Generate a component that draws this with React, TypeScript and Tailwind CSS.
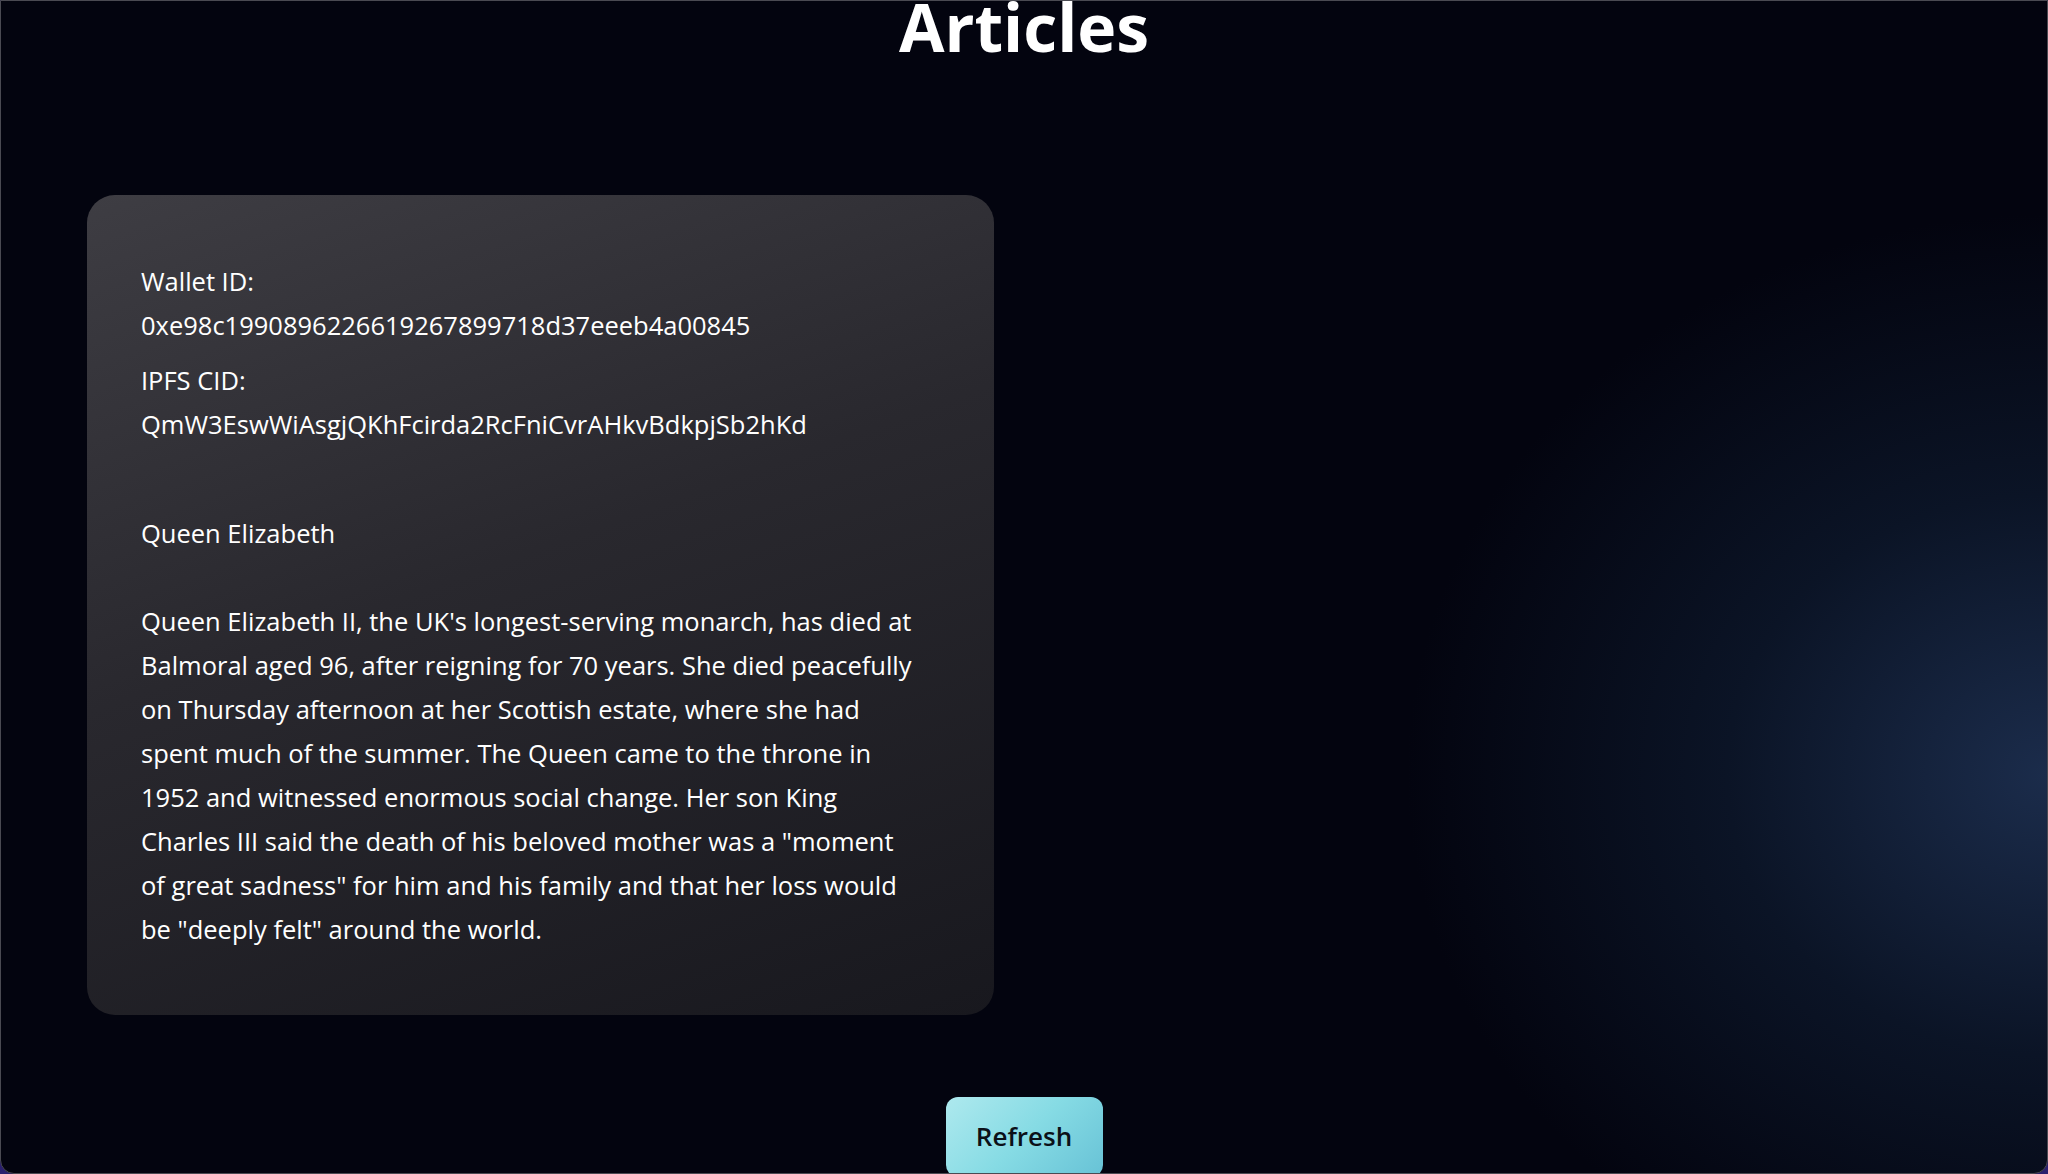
import React from 'react';

const article = {
  wallet: '0xe98c1990896226619267899718d37eeeb4a00845',
  cid: 'QmW3EswWiAsgjQKhFcirda2RcFniCvrAHkvBdkpjSb2hKd',
  title: 'Queen Elizabeth',
  // kept as the lines the original layout wraps to
  body: [
    'Queen Elizabeth II, the UK\'s longest-serving monarch, has died at',
    'Balmoral aged 96, after reigning for 70 years. She died peacefully',
    'on Thursday afternoon at her Scottish estate, where she had',
    'spent much of the summer. The Queen came to the throne in',
    '1952 and witnessed enormous social change. Her son King',
    'Charles III said the death of his beloved mother was a "moment',
    'of great sadness" for him and his family and that her loss would',
    'be "deeply felt" around the world.',
  ],
};

function ArticleCard() {
  return (
    <div className="w-[907px] rounded-[28px] bg-[linear-gradient(160deg,#3e3d43_0%,#29282e_45%,#18181e_100%)] px-[54px] pt-[64px] pb-[64px] text-[25.5px] leading-[44px] text-white">
      <p>Wallet ID:</p>
      <p>{article.wallet}</p>
      <p className="mt-[11px]">IPFS CID:</p>
      <p>{article.cid}</p>
      <p className="mt-[65px]">{article.title}</p>
      <p className="mt-[44px]">
        {article.body.map((line) => (
          <span key={line} className="block whitespace-nowrap">
            {line}
          </span>
        ))}
      </p>
    </div>
  );
}

export default function App() {
  return (
    <div className="h-[1174px] w-full bg-[#2a1f6e]">
      <div
        className="flex h-full w-full flex-col overflow-hidden rounded-b-[14px] border border-[#4a4a52] bg-[radial-gradient(ellipse_640px_560px_at_100%_66%,#1b2c4b_0%,#0b1426_50%,#03040f_100%)] bg-[#03040f]"
        style={{ fontFamily: '"Open Sans", "Noto Sans", sans-serif' }}
      >
        <h1 className="mt-[-20px] text-center text-[66px] font-bold leading-[90px] text-white">
          Articles
        </h1>

        <div className="mt-[124px] px-[86px]">
          <ArticleCard />
        </div>

        <div className="mt-[82px] flex justify-center">
          <button className="h-[80px] w-[157px] rounded-[12px] bg-[linear-gradient(135deg,#aee9ee_0%,#86dbe4_50%,#67c2d6_100%)] pb-[2px] text-[26px] font-semibold text-[#0b1018]">
            Refresh
          </button>
        </div>
      </div>
    </div>
  );
}
